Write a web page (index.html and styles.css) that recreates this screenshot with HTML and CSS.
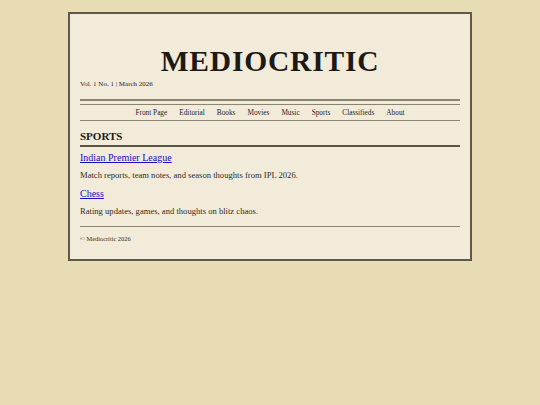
FILE: index.html
```html
<!DOCTYPE html>
<html lang="en">
<head>
<meta charset="utf-8">
<title>Mediocritic — Sports</title>
<link rel="stylesheet" href="styles.css">
</head>
<body>
<div class="paper">
  <header class="masthead">
    <h1 class="title">MEDIOCRITIC</h1>
    <p class="issue">Vol. 1 No. 1 | March 2026</p>
  </header>
  <nav class="nav">
    <a href="#">Front Page</a>
    <a href="#">Editorial</a>
    <a href="#">Books</a>
    <a href="#">Movies</a>
    <a href="#">Music</a>
    <a href="#">Sports</a>
    <a href="#">Classifieds</a>
    <a href="#">About</a>
  </nav>
  <main class="section">
    <h2 class="section-title">SPORTS</h2>
    <h3 class="entry-title"><a href="#">Indian Premier League</a></h3>
    <p class="entry-text">Match reports, team notes, and season thoughts from IPL 2026.</p>
    <h3 class="entry-title"><a href="#">Chess</a></h3>
    <p class="entry-text">Rating updates, games, and thoughts on blitz chaos.</p>
  </main>
  <footer class="footer">© Mediocritic 2026</footer>
</div>
</body>
</html>
```

FILE: styles.css
```css
html, body {
  margin: 0;
  padding: 0;
}

body {
  background: #e8dcb5;
  font-family: "Liberation Serif", "Times New Roman", serif;
  color: #24221d;
  padding-top: 12px;
}

.paper {
  box-sizing: border-box;
  width: 404px;
  margin: 0 auto;
  background: #f3ebd9;
  border: 2px solid #5f5949;
  padding: 33px 10px 16px;
}

.masthead {
  border-bottom: 2px solid #8a8472;
  padding-bottom: 10px;
}

.title {
  margin: 0;
  text-align: center;
  font-size: 29.5px;
  line-height: 29px;
  font-weight: bold;
  letter-spacing: 0.8px;
  color: #1b1a17;
}

.issue {
  margin: 4px 0 0;
  font-size: 7px;
  line-height: 9px;
  color: #24221d;
}

.nav {
  margin-top: 3px;
  border-top: 1px solid #8a8472;
  border-bottom: 1px solid #8a8472;
  padding: 3px 0;
  display: flex;
  justify-content: center;
  gap: 12px;
  font-size: 7.3px;
  line-height: 9px;
}

.nav a {
  color: #24221d;
  text-decoration: none;
}

.section-title {
  margin: 9px 0 0;
  font-size: 11px;
  line-height: 13px;
  font-weight: bold;
  padding-bottom: 2px;
  border-bottom: 2px solid #5a5444;
  color: #1b1a17;
}

.entry-title {
  margin: 5px 0 0;
  font-size: 10px;
  line-height: 12px;
  font-weight: normal;
}

.entry-title a {
  color: #1a0dcc;
  text-decoration: underline;
}

.entry-text {
  margin: 6px 0 7px;
  font-size: 8.6px;
  line-height: 11px;
  color: #2e2b25;
}

.section .entry-text:last-child {
  margin-bottom: 0;
}

.footer {
  margin-top: 9px;
  border-top: 1px solid #8a8472;
  padding-top: 8px;
  font-size: 6.4px;
  line-height: 8px;
  color: #2e2b25;
}
```
